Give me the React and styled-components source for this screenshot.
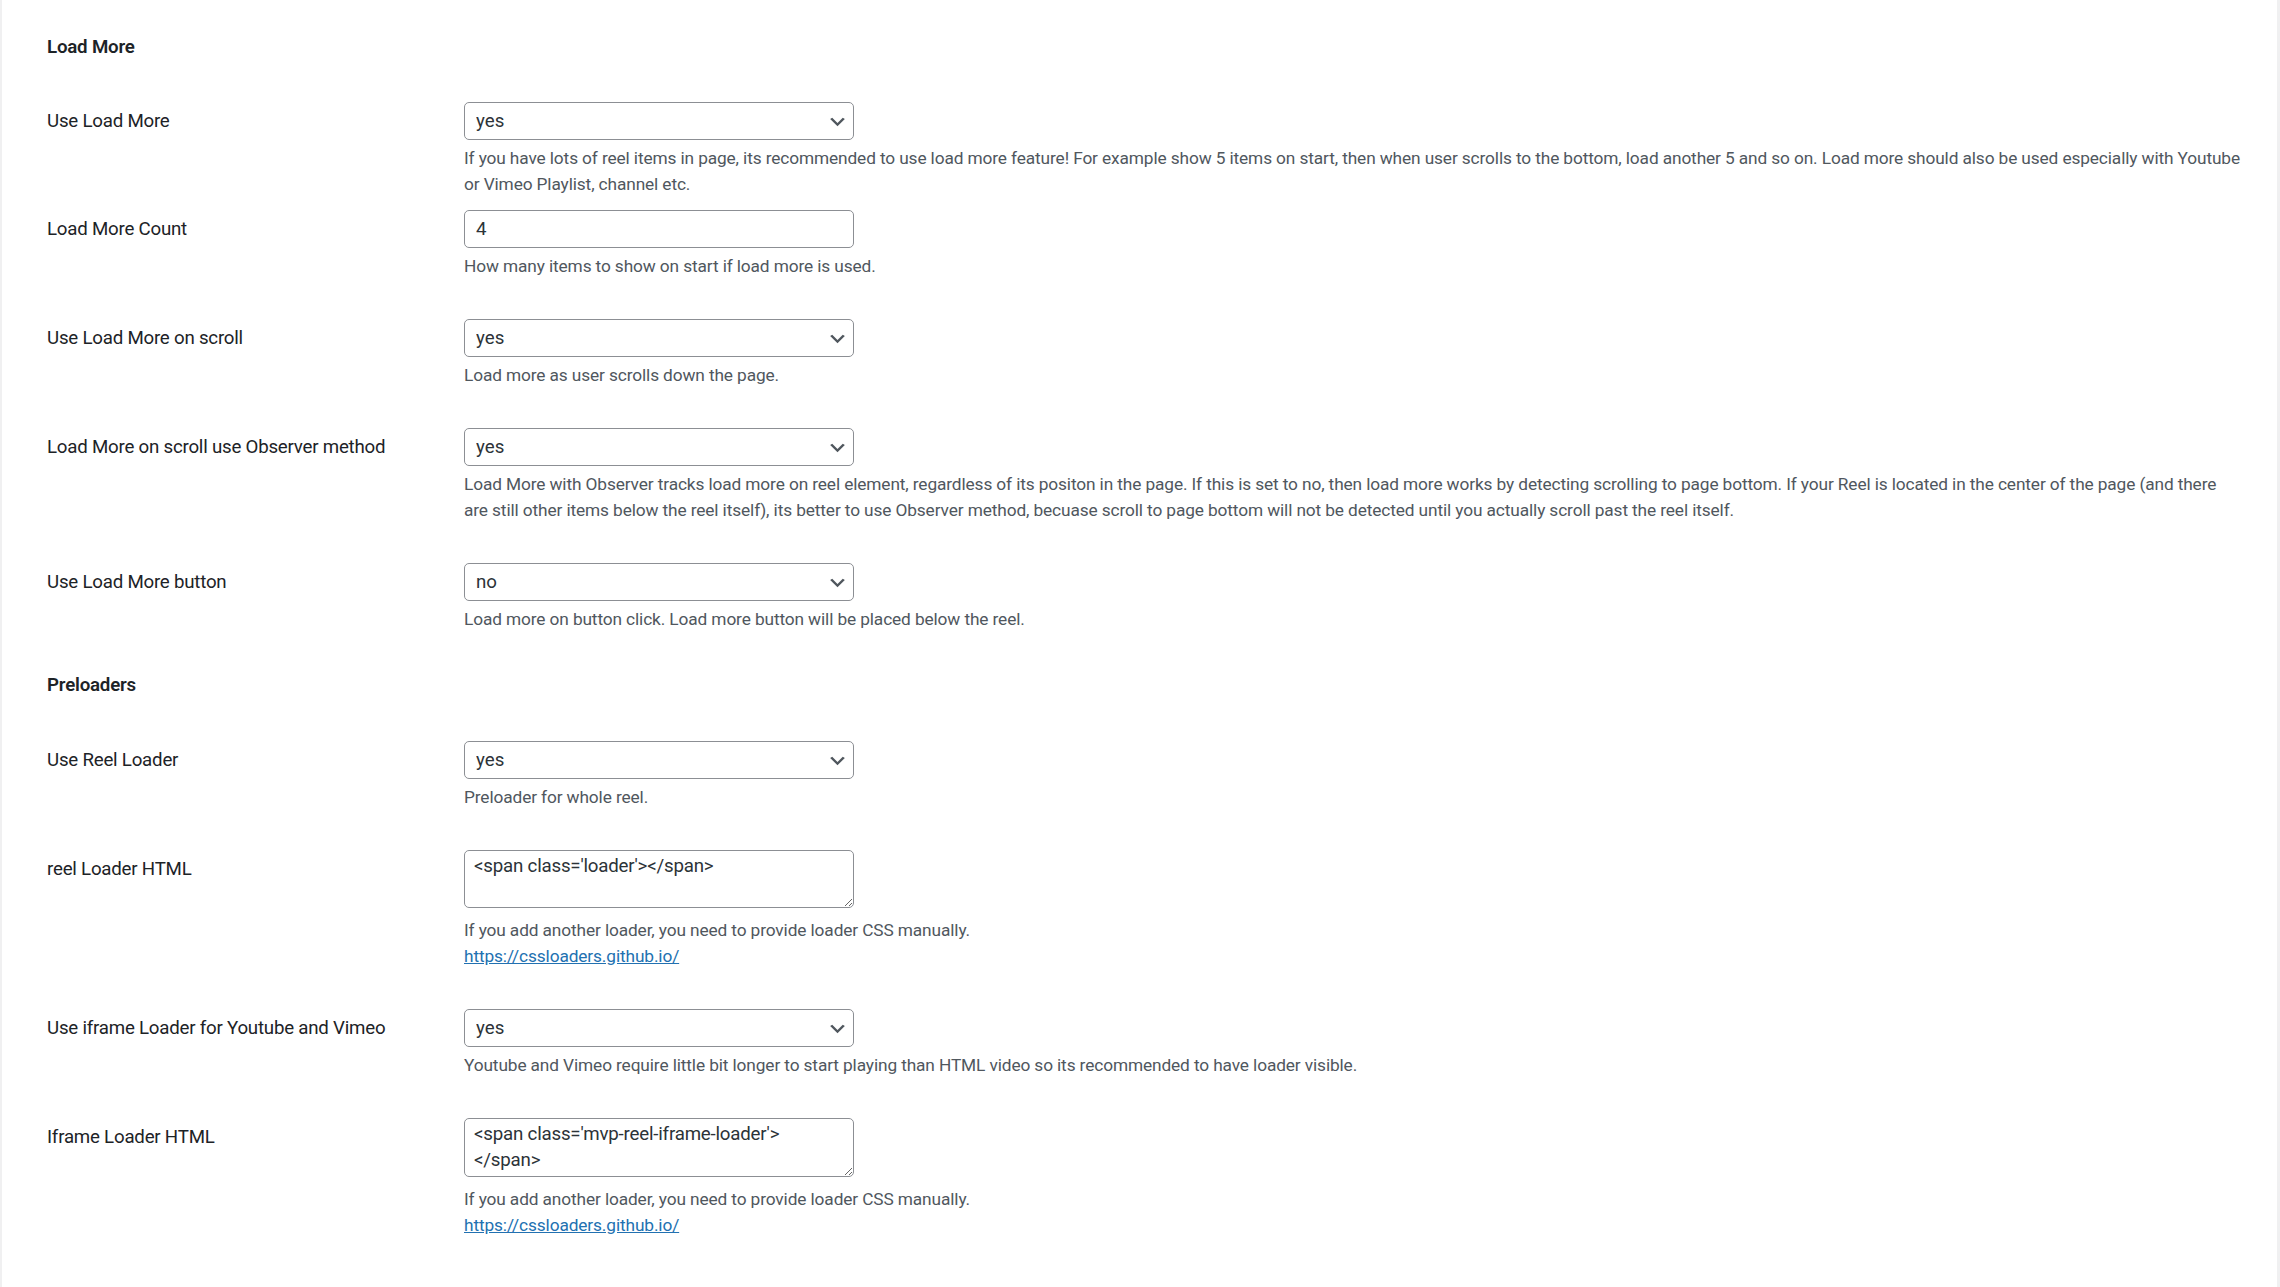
import React from 'react';
import styled, {createGlobalStyle} from 'styled-components';

const GlobalStyle = createGlobalStyle`
  body {
    margin: 0;
    background: #f0f0f1;
    font-family: Roboto, "Noto Sans", sans-serif;
    color: #1d2327;
  }
`;

const settings = [
  {
    section: 'Load More',
    rows: [
      {
        label: 'Use Load More',
        type: 'select',
        value: 'yes',
        desc: 'If you have lots of reel items in page, its recommended to use load more feature! For example show 5 items on start, then when user scrolls to the bottom, load another 5 and so on. Load more should also be used especially with Youtube or Vimeo Playlist, channel etc.',
        bottom: 0,
      },
      {
        label: 'Load More Count',
        type: 'text',
        value: '4',
        desc: 'How many items to show on start if load more is used.',
        top: 13,
      },
      {
        label: 'Use Load More on scroll',
        type: 'select',
        value: 'yes',
        desc: 'Load more as user scrolls down the page.',
      },
      {
        label: 'Load More on scroll use Observer method',
        type: 'select',
        value: 'yes',
        desc: 'Load More with Observer tracks load more on reel element, regardless of its positon in the page. If this is set to no, then load more works by detecting scrolling to page bottom. If your Reel is located in the center of the page (and there are still other items below the reel itself), its better to use Observer method, becuase scroll to page bottom will not be detected until you actually scroll past the reel itself.',
        descWidth: 1762,
      },
      {
        label: 'Use Load More button',
        type: 'select',
        value: 'no',
        desc: 'Load more on button click. Load more button will be placed below the reel.',
      },
    ],
  },
  {
    section: 'Preloaders',
    rows: [
      {
        label: 'Use Reel Loader',
        type: 'select',
        value: 'yes',
        desc: 'Preloader for whole reel.',
      },
      {
        label: 'reel Loader HTML',
        type: 'textarea',
        value: "<span class='loader'></span>",
        desc: 'If you add another loader, you need to provide loader CSS manually.',
        link: 'https://cssloaders.github.io/',
      },
      {
        label: 'Use iframe Loader for Youtube and Vimeo',
        type: 'select',
        value: 'yes',
        desc: 'Youtube and Vimeo require little bit longer to start playing than HTML video so its recommended to have loader visible.',
      },
      {
        label: 'Iframe Loader HTML',
        type: 'textarea',
        value: "<span class='mvp-reel-iframe-loader'></span>",
        desc: 'If you add another loader, you need to provide loader CSS manually.',
        link: 'https://cssloaders.github.io/',
        tall: true,
      },
    ],
  },
];

const Chevron = () => (
  <ChevronIcon viewBox="0 0 20 20" aria-hidden="true">
    <path d="M5 6l5 5 5-5 2 1-7 7-7-7 2-1z" fill="#50575e" />
  </ChevronIcon>
);

const Control = ({row}) => {
  if (row.type === 'select') {
    return (
      <SelectWrap>
        <Select defaultValue={row.value}>
          <option value="yes">yes</option>
          <option value="no">no</option>
        </Select>
        <Chevron />
      </SelectWrap>
    );
  }
  if (row.type === 'textarea') {
    return <TextArea readOnly defaultValue={row.value} $tall={row.tall} />;
  }
  return <TextInput type="text" readOnly defaultValue={row.value} />;
};

const App = () => {
  return (
    <>
      <GlobalStyle />
      <Panel>
        {settings.map((group) => (
          <section key={group.section}>
            <SectionTitle>{group.section}</SectionTitle>
            {group.rows.map((row) => (
              <Row key={row.label} $top={row.top} $bottom={row.bottom}>
                <Label>{row.label}</Label>
                <Field>
                  <Control row={row} />
                  <Description
                    $afterArea={row.type === 'textarea'}
                    $maxWidth={row.descWidth}
                  >
                    {row.desc}
                    {row.link && (
                      <>
                        <br />
                        <DocLink href={row.link}>{row.link}</DocLink>
                      </>
                    )}
                  </Description>
                </Field>
              </Row>
            ))}
          </section>
        ))}
      </Panel>
    </>
  );
};

const Panel = styled.main`
  background: #fff;
  margin: 0 3px 0 2px;
  min-height: 100vh;
  padding: 13.5px 27px 40px 45px;
  box-sizing: border-box;
`;

const SectionTitle = styled.h2`
  margin: 21px 0 23.5px;
  font-size: 18.7px;
  line-height: 24px;
  font-weight: 600;
  letter-spacing: -0.2px;
  color: #1d2327;
`;

const Row = styled.div`
  display: grid;
  grid-template-columns: 417px 1fr;
  padding: ${(p) => (p.$top ?? 20)}px 0 ${(p) => (p.$bottom ?? 20)}px;
`;

const Label = styled.div`
  font-size: 18.7px;
  line-height: 24px;
  letter-spacing: -0.22px;
  padding-top: 7px;
  color: #1d2327;
`;

const Field = styled.div`
  min-width: 0;
`;

const SelectWrap = styled.div`
  position: relative;
  width: 390px;
  height: 38px;
`;

const Select = styled.select`
  appearance: none;
  width: 100%;
  height: 100%;
  box-sizing: border-box;
  border: 1px solid #8c8f94;
  border-radius: 5px;
  background: #fff;
  padding: 0 32px 0 11px;
  font-family: inherit;
  font-size: 18.7px;
  color: #2c3338;
  outline: none;
`;

const ChevronIcon = styled.svg`
  position: absolute;
  right: 6px;
  top: 50%;
  width: 21px;
  height: 21px;
  transform: translateY(-45%);
  pointer-events: none;
`;

const TextInput = styled.input`
  display: block;
  width: 390px;
  height: 38px;
  box-sizing: border-box;
  border: 1px solid #8c8f94;
  border-radius: 5px;
  padding: 0 11px;
  font-family: inherit;
  font-size: 18.7px;
  color: #2c3338;
  outline: none;
`;

const TextArea = styled.textarea`
  display: block;
  width: 390px;
  height: ${(p) => (p.$tall ? 59 : 58)}px;
  box-sizing: border-box;
  border: 1px solid #8c8f94;
  border-radius: 5px;
  padding: 2px 9px;
  font-family: inherit;
  font-size: 18.7px;
  line-height: 26px;
  letter-spacing: -0.2px;
  color: #2c3338;
  outline: none;
`;

const Description = styled.p`
  margin: ${(p) => (p.$afterArea ? 9 : 5)}px 0 0;
  max-width: ${(p) => (p.$maxWidth ? `${p.$maxWidth}px` : 'none')};
  font-size: 17.3px;
  line-height: 26px;
  letter-spacing: -0.12px;
  color: #50575e;
`;

const DocLink = styled.a`
  color: #2271b1;
  text-decoration: underline;
`;

export default App;
